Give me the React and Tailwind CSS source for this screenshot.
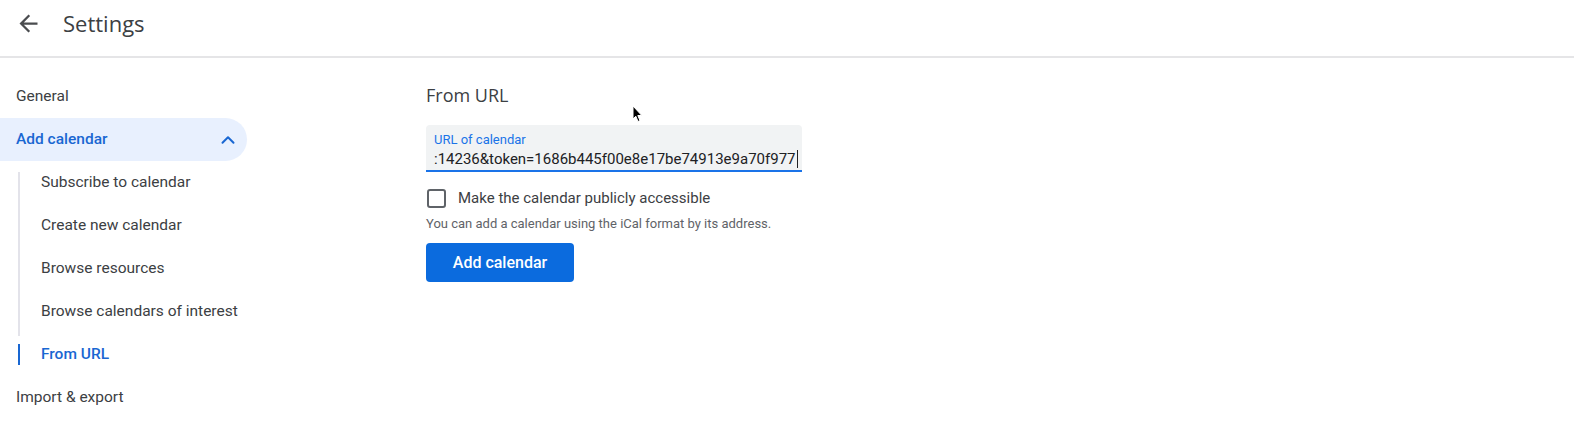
import { ChevronUp } from "lucide-react";

const subItems = [
  "Subscribe to calendar",
  "Create new calendar",
  "Browse resources",
  "Browse calendars of interest",
];

const App = () => {
  return (
    <div className="w-[1574px] h-[443px] bg-white text-[#3c4043] font-['Roboto',sans-serif] overflow-hidden">
      {/* header */}
      <div className="h-[58px] border-b-2 border-[#e5e5e7]">
        <div className="h-[46px] flex items-center">
          <div className="w-[56px] flex justify-center">
            <svg width="27" height="27" viewBox="0 0 24 24" fill="#4a4c4f">
              <path d="M20 11H7.83l5.59-5.59L12 4l-8 8 8 8 1.41-1.41L7.83 13H20v-2z" />
            </svg>
          </div>
          <span className="ml-[7px] text-[22px] font-['Open_Sans',sans-serif] text-[#3c4043]">Settings</span>
        </div>
      </div>

      <div className="flex">
        {/* sidebar */}
        <div className="w-[426px] shrink-0 pt-[17px] text-[15.5px]">
          <div className="h-[43px] flex items-center pl-[16px]">General</div>
          <div className="h-[43px] w-[247px] flex items-center justify-between pl-[16px] pr-[8px] rounded-r-full bg-[#e8f0fe] text-[#1967d2] font-medium">
            <span>Add calendar</span>
            <ChevronUp size={22} strokeWidth={2.2} />
          </div>
          <div className="ml-[18px] relative">
            <div className="absolute left-0 top-[11px] h-[164px] w-[2px] bg-[#e3e3ea]" />
            {subItems.map((item) => (
              <div key={item} className="h-[43px] flex items-center pl-[23px]">
                {item}
              </div>
            ))}
            <div className="h-[43px] flex items-center pl-[23px] font-medium text-[#1967d2] relative">
              <div className="absolute left-0 top-[11px] h-[21px] w-[2px] bg-[#1967d2]" />
              From URL
            </div>
          </div>
          <div className="h-[43px] flex items-center pl-[16px]">Import &amp; export</div>
        </div>

        {/* content */}
        <div className="pt-[25px] relative flex-1">
          <h2 className="text-[18px] font-['Open_Sans',sans-serif] text-[#3c4043] leading-[24px]">From URL</h2>
          <div className="mt-[18px] w-[376px] h-[47px] bg-[#f1f3f4] rounded-t-[4px] border-b-2 border-[#1a73e8] pl-[8px] pt-[7px]">
            <div className="text-[13px] leading-[16px] text-[#1a73e8]">URL of calendar</div>
            <div className="mt-[1px] text-[15px] leading-[20px] text-[#202124] flex items-center">
              <span>:14236&amp;token=1686b445f00e8e17be74913e9a70f977</span>
              <span className="w-px h-[18px] bg-[#202124] ml-[1px]" />
            </div>
          </div>
          <div className="mt-[16px] h-[20px] flex items-center">
            <div className="ml-[1px] w-[19px] h-[19px] border-2 border-[#5f6368] rounded-[3px]" />
            <span className="ml-[12px] text-[15px] leading-[20px] text-[#3c4043]">Make the calendar publicly accessible</span>
          </div>
          <div className="mt-[8px] text-[13px] text-[#5f6368] leading-[16px]">
            You can add a calendar using the iCal format by its address.
          </div>
          <button className="mt-[11px] w-[148px] h-[39px] rounded-[4px] bg-[#0b6bde] text-white text-[16px] font-medium">
            Add calendar
          </button>

          {/* mouse pointer */}
          <svg className="absolute left-[206px] top-[47px]" width="11" height="18" viewBox="0 0 11 18">
            <path d="M1 1 L1 14 L3.8 11.2 L6 16.5 L8 15.6 L5.8 10.5 L9.8 10.5 Z" fill="#000" stroke="#fff" strokeWidth="1" />
          </svg>
        </div>
      </div>
    </div>
  );
};

export default App;
